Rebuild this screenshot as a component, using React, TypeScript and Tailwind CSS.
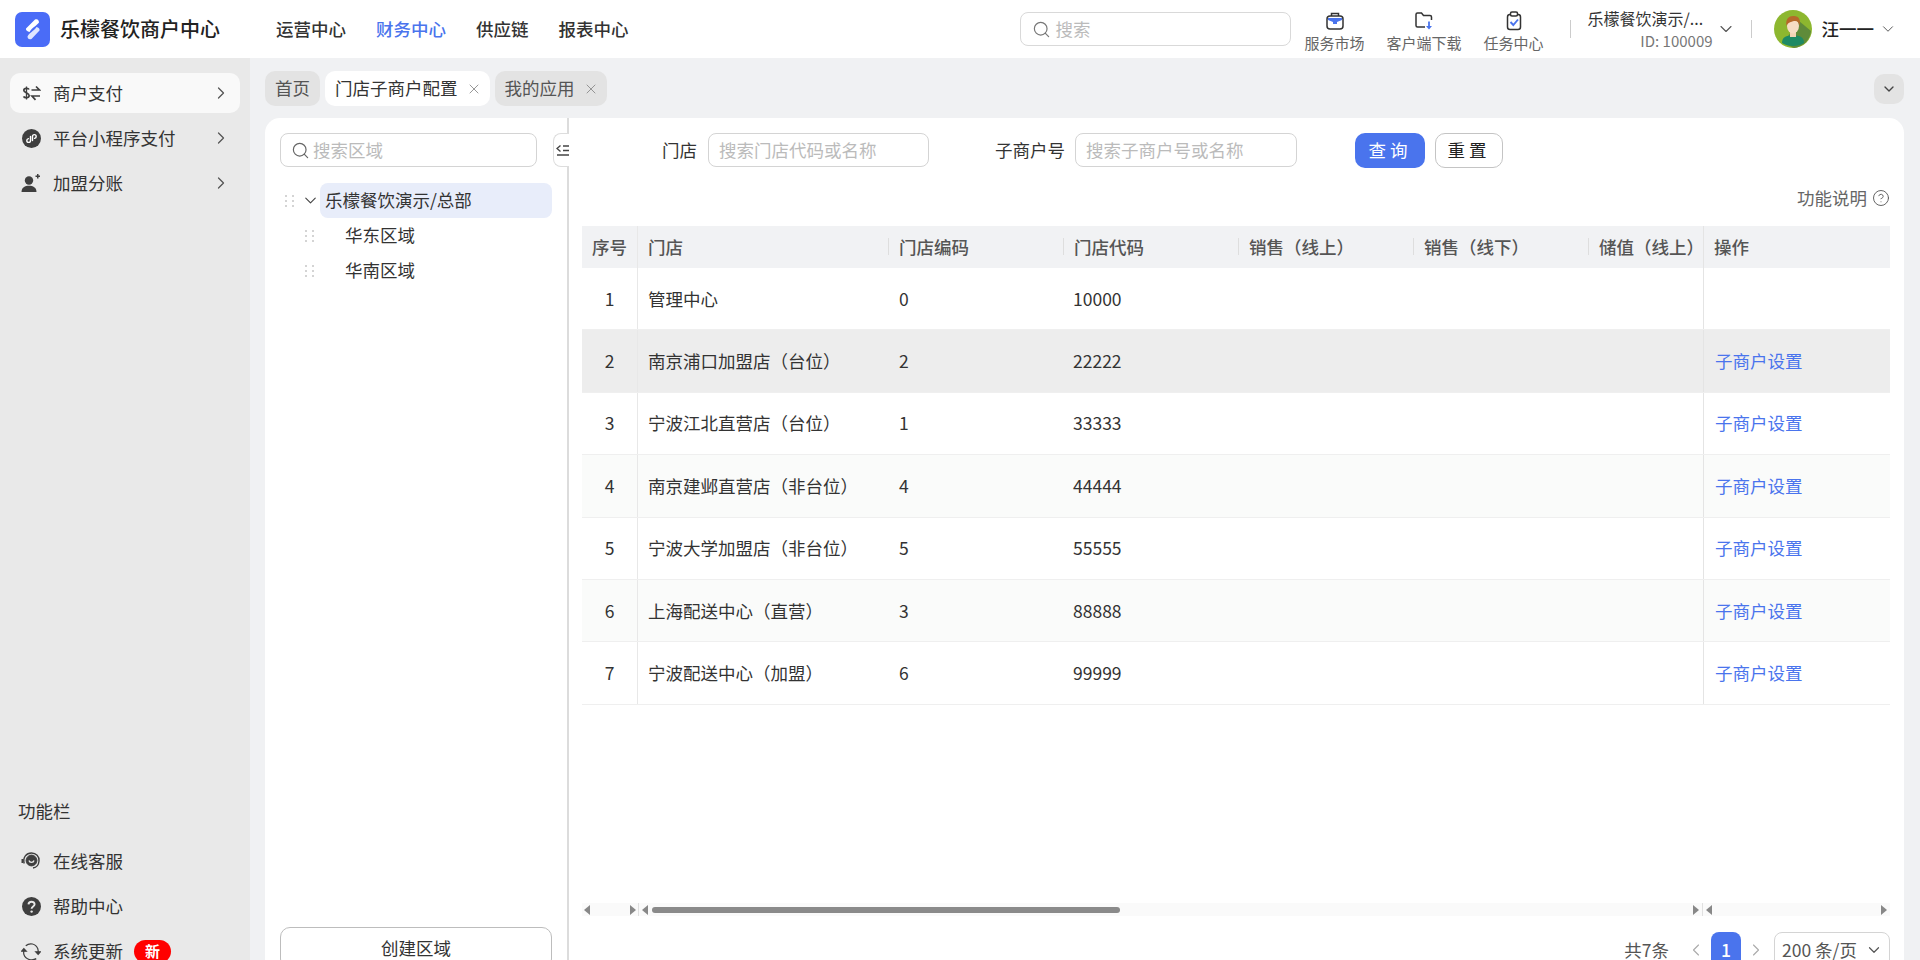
import { Search, ChevronRight, ChevronDown, ChevronLeft, X, CircleHelp } from "lucide-react";

const rows = [
  { no: 1, name: "管理中心", code: "0", shop: "10000", link: false, bg: "bg-white" },
  { no: 2, name: "南京浦口加盟店（台位）", code: "2", shop: "22222", link: true, bg: "bg-[#ededed]" },
  { no: 3, name: "宁波江北直营店（台位）", code: "1", shop: "33333", link: true, bg: "bg-white" },
  { no: 4, name: "南京建邺直营店（非台位）", code: "4", shop: "44444", link: true, bg: "bg-[#fafbfa]" },
  { no: 5, name: "宁波大学加盟店（非台位）", code: "5", shop: "55555", link: true, bg: "bg-white" },
  { no: 6, name: "上海配送中心（直营）", code: "3", shop: "88888", link: true, bg: "bg-[#fafbfa]" },
  { no: 7, name: "宁波配送中心（加盟）", code: "6", shop: "99999", link: true, bg: "bg-white" },
];

const headers = ["门店编码", "门店代码", "销售（线上）", "销售（线下）", "储值（线上）"];

function Logo() {
  return (
    <svg width="35" height="35" viewBox="0 0 35 35">
      <rect width="35" height="35" rx="7" fill="#4a6cf7" />
      <path d="M11 16.5 L20 7.5 C22.5 6.5 24 8 24 10.5 C22 13.5 17 15.5 14.5 20 C12.5 19.5 10.5 18.5 11 16.5Z" fill="#fff" />
      <path d="M12.5 24.5 C14 21 19 19 21.5 15 C23.5 15.5 25 16.5 24.5 18.5 L16.5 27 C14 28 12.5 26.5 12.5 24.5Z" fill="#dfe6ff" />
    </svg>
  );
}

function PayIcon() {
  return (
    <svg width="19" height="19" viewBox="0 0 19 19" fill="none" stroke="#3f3f3f" strokeWidth="1.7">
      <path d="M7 5.5 C6.5 4 2 3.7 1.8 6.2 C1.7 9 7.2 8.5 7.2 11.8 C7 14.3 2.3 14.2 1.6 12.4" />
      <path d="M4.5 2.5 V15.5" strokeWidth="1.3" />
      <path d="M9.5 6 H17.5 L14 2.5" />
      <path d="M18 12 H10 L13.5 15.8" />
    </svg>
  );
}

function MiniIcon() {
  return (
    <svg width="19" height="19" viewBox="0 0 19 19" fill="none">
      <circle cx="9.5" cy="9.5" r="9.5" fill="#3f3f3f" />
      <path d="M8.5 7.5 V11.5 C8.5 14 4.8 14 4.8 11.5 C4.8 10.4 5.6 9.8 6.4 9.6 M10.5 11.5 V7.5 C10.5 5 14.2 5 14.2 7.5 C14.2 8.6 13.4 9.2 12.6 9.4" stroke="#fff" strokeWidth="1.4" strokeLinecap="round" />
    </svg>
  );
}

function JoinIcon() {
  return (
    <svg width="20" height="20" viewBox="0 0 20 20" fill="#3f3f3f">
      <circle cx="8" cy="7.5" r="4.2" />
      <path d="M0.5 19 C0.5 14.5 4 12.8 8 12.8 C12 12.8 15.5 14.5 15.5 19 Z" />
      <path d="M14.5 3.2 H19 M16.75 1 V5.4" stroke="#3f3f3f" strokeWidth="1.5" fill="none" />
    </svg>
  );
}

function ServiceIcon() {
  return (
    <svg width="20" height="20" viewBox="0 0 20 20" fill="none" stroke="#3f3f3f">
      <path d="M3.2 12.5 C1.5 6 5.5 2 10.5 2 C15 2 18.5 5.5 18 10 C17.7 13.5 15.5 16.5 12 17" strokeWidth="1.4" />
      <circle cx="10.5" cy="9.5" r="5.4" fill="#3f3f3f" />
      <path d="M8 9.5 C8.5 12 12.5 12 13 9.5" stroke="#e9e9e9" strokeWidth="1.3" />
      <path d="M1.5 8 V12" strokeWidth="2" />
    </svg>
  );
}

function HelpIcon() {
  return (
    <svg width="19" height="19" viewBox="0 0 19 19">
      <circle cx="9.5" cy="9.5" r="9.5" fill="#3f3f3f" />
      <path d="M6.5 7.4 C6.6 3.8 12.6 3.9 12.6 7.3 C12.6 9.6 9.6 9.5 9.6 11.8" stroke="#e9e9e9" strokeWidth="1.9" fill="none" />
      <circle cx="9.6" cy="14.6" r="1.2" fill="#e9e9e9" />
    </svg>
  );
}

function RefreshIcon() {
  return (
    <svg width="21" height="21" viewBox="0 0 21 21" fill="none" stroke="#3f3f3f" strokeWidth="1.3">
      <path d="M5 4.5 C9 1 15.5 2 17.6 7.5 C18.2 9.5 18.2 10.5 18 12" />
      <path d="M16 18 C12 20.5 5 19.5 3 13.5 C2.7 12 2.7 11 3 9.5" />
      <path d="M15.5 10.8 L18 13.5 L20.3 10.8 Z" fill="#3f3f3f" />
      <path d="M0.7 10.2 L3 7.5 L5.5 10.2 Z" fill="#3f3f3f" />
    </svg>
  );
}

function BagIcon() {
  return (
    <svg width="20" height="20" viewBox="0 0 20 20" fill="none">
      <path d="M6.5 5 V2.5 H13.5 V5" stroke="#333" strokeWidth="1.5" />
      <rect x="2" y="5" width="16" height="13" rx="3" stroke="#333" strokeWidth="1.5" />
      <path d="M3 7 H17 V9 L12 11 V13 H8 V11 L3 9 Z" fill="#4a74ed" />
    </svg>
  );
}

function FolderIcon() {
  return (
    <svg width="20" height="20" viewBox="0 0 20 20" fill="none">
      <path d="M11 16 H3.5 C2.5 16 2 15.5 2 14.5 V3.5 C2 2.5 2.5 2 3.5 2 H7.5 L9.5 4.5 H16 C17 4.5 17.5 5 17.5 6 V9" stroke="#333" strokeWidth="1.5" />
      <path d="M15 10.5 V16" stroke="#4a74ed" strokeWidth="1.8" />
      <path d="M12 15 H18 L15 18.5 Z" fill="#4a74ed" />
    </svg>
  );
}

function TaskIcon() {
  return (
    <svg width="20" height="20" viewBox="0 0 20 20" fill="none">
      <rect x="3.5" y="3.5" width="13" height="15" rx="2.5" stroke="#333" strokeWidth="1.5" />
      <rect x="6.5" y="1" width="7" height="4" rx="1.5" fill="#fff" stroke="#333" strokeWidth="1.5" />
      <path d="M6.5 11 L9.3 14 L14 8.5" stroke="#4a74ed" strokeWidth="1.9" />
    </svg>
  );
}

function Avatar() {
  return (
    <svg width="38" height="38" viewBox="0 0 38 38">
      <circle cx="19" cy="19" r="19" fill="#8db72f" />
      <path d="M25 11 L37 21 C36 31 28 37 20 38 L9 33 Z" fill="#5f8b3a" />
      <path d="M8 33 C8 27 12 25.5 19 25.5 C26 25.5 30 27 30 33 C27 35 23 36 19 36 C15 36 11 35 8 33Z" fill="#1e8a64" />
      <rect x="16" y="21" width="6" height="6" fill="#f3d3b5" />
      <ellipse cx="19" cy="16" rx="6" ry="7.5" fill="#f6dcc4" />
      <path d="M12.5 16 C11 8 16 5.5 20 6 C25 6 27 10 25.5 16 C25 12 23 10.5 20 11 C17 12 14 12 12.5 16Z" fill="#b5692a" />
    </svg>
  );
}

function Dots() {
  return (
    <div className="grid w-[10px] grid-cols-2 gap-x-[4px] gap-y-[3px]">
      {[0, 1, 2, 3, 4, 5].map((i) => (
        <span key={i} className="h-[2px] w-[2px] bg-[#d4d4d4]" />
      ))}
    </div>
  );
}

function NavItem({ icon, label, active }: { icon: React.ReactNode; label: string; active?: boolean }) {
  return (
    <div className={`mx-[10px] flex h-[40px] items-center rounded-[10px] pl-[11px] pr-[9px] ${active ? "bg-[#f9f9f9]" : ""}`}>
      <span className="flex w-[20px] justify-center">{icon}</span>
      <span className="ml-[12px] flex-1 text-[#333]">{label}</span>
      <ChevronRight size={20} strokeWidth={1.5} className="text-[#555]" />
    </div>
  );
}

function TopLink({ icon, label }: { icon: React.ReactNode; label: string }) {
  return (
    <div className="flex flex-col items-center">
      <span className="mt-[5px] flex h-[22px] items-center">{icon}</span>
      <span className="mt-[1px] text-[15px] leading-[20px] text-[#666]">{label}</span>
    </div>
  );
}

export default function App() {
  return (
    <div className="flex h-[960px] w-[1920px] flex-col overflow-hidden font-['Noto_Sans_CJK_SC','Noto_Sans',sans-serif] text-[17.5px] text-[#333]">
      {/* Header */}
      <header className="flex h-[58px] shrink-0 items-center bg-white">
        <div className="ml-[15px]"><Logo /></div>
        <div className="ml-[10px] w-[160px] text-[20px] font-medium text-[#222]">乐檬餐饮商户中心</div>
        <nav className="ml-[56px] flex gap-[30px] font-medium text-[#333]">
          <span>运营中心</span>
          <span className="text-[#4a74ed]">财务中心</span>
          <span>供应链</span>
          <span>报表中心</span>
        </nav>
        <div className="ml-[391px] flex h-[34px] w-[271px] items-center rounded-lg border border-[#d9d9d9] pl-[11px]">
          <Search size={19} strokeWidth={1.5} className="text-[#777]" />
          <span className="ml-[5px] text-[#bbb]">搜索</span>
        </div>
        <div className="ml-[14px] flex gap-[22px]">
          <TopLink icon={<BagIcon />} label="服务市场" />
          <TopLink icon={<FolderIcon />} label="客户端下载" />
          <TopLink icon={<TaskIcon />} label="任务中心" />
        </div>
        <span className="ml-[26px] h-[18px] w-px bg-[#ccc]" />
        <div className="ml-[17px] flex w-[125px] flex-col">
          <span className="text-[16px] leading-[20px] text-[#333]">乐檬餐饮演示/...</span>
          <span className="mt-[3px] self-end text-[15px] leading-[20px] text-[#777]">ID: 100009</span>
        </div>
        <ChevronDown size={20} strokeWidth={1.3} className="ml-[3px] text-[#555]" />
        <span className="ml-[15px] h-[18px] w-px bg-[#ccc]" />
        <div className="ml-[22px]"><Avatar /></div>
        <span className="ml-[10px] font-medium text-[#222]">汪一一</span>
        <ChevronDown size={18} strokeWidth={1.3} className="ml-[5px] text-[#555]" />
      </header>

      <div className="flex h-[916px] shrink-0">
        {/* Sidebar */}
        <aside className="flex w-[250px] shrink-0 flex-col gap-[5px] bg-[#e9e9e9] pb-[3px] pt-[15px]">
          <NavItem icon={<PayIcon />} label="商户支付" active />
          <NavItem icon={<MiniIcon />} label="平台小程序支付" />
          <NavItem icon={<JoinIcon />} label="加盟分账" />
          <div className="mt-auto mb-[12px] ml-[18px] text-[#333]">功能栏</div>
          {[
            { icon: <ServiceIcon />, label: "在线客服" },
            { icon: <HelpIcon />, label: "帮助中心" },
          ].map((f) => (
            <div key={f.label} className="mx-[10px] flex h-[40px] items-center pl-[11px]">
              <span className="flex w-[20px] justify-center">{f.icon}</span>
              <span className="ml-[12px]">{f.label}</span>
            </div>
          ))}
          <div className="mx-[10px] flex h-[40px] items-center pl-[11px]">
            <span className="flex w-[20px] justify-center"><RefreshIcon /></span>
            <span className="ml-[12px]">系统更新</span>
            <span className="ml-[11px] flex h-[23px] w-[37px] items-center justify-center rounded-full bg-[#ff0000] text-[15px] font-bold text-white">新</span>
          </div>
        </aside>

        {/* Main */}
        <main className="flex flex-1 flex-col bg-[#f0f1f3] pl-[15px] pr-[16px]">
          <div className="flex h-[60px] shrink-0 items-center pb-[-2px] pt-[1px]">
            <div className="flex flex-1 gap-[5px]">
              <div className="flex h-[35px] items-center rounded-[10px] bg-[#e3e3e3] px-[10px] text-[#555]">首页</div>
              <div className="flex h-[35px] items-center rounded-[10px] bg-white pl-[10px] pr-[8px] text-[#333]">
                门店子商户配置
                <X size={16} strokeWidth={1.3} className="ml-[8px] text-[#888]" />
              </div>
              <div className="flex h-[35px] items-center rounded-[10px] bg-[#e3e3e3] pl-[10px] pr-[8px] text-[#555]">
                我的应用
                <X size={16} strokeWidth={1.3} className="ml-[8px] text-[#888]" />
              </div>
            </div>
            <div className="flex h-[30px] w-[30px] items-center justify-center rounded-[10px] bg-[#e3e3e3]">
              <ChevronDown size={16} className="text-[#444]" />
            </div>
          </div>

          <div className="relative flex h-[856px] shrink-0 rounded-t-[15px] bg-white">
            {/* Area tree */}
            <section className="flex w-[302px] shrink-0 flex-col px-[15px] pb-[5px] pt-[15px]">
              <div className="flex h-[34px] w-[257px] items-center rounded-lg border border-[#d4d4d4] pl-[10px]">
                <Search size={19} strokeWidth={1.5} className="text-[#666]" />
                <span className="ml-[3px] text-[#bbb]">搜索区域</span>
              </div>
              <div className="ml-[5px] mt-[16px] flex h-[35px] items-center">
                <Dots />
                <ChevronDown size={19} strokeWidth={1.4} className="ml-[6px] text-[#444]" />
                <div className="flex h-[35px] w-[232px] items-center rounded-lg bg-[#e8edfa] pl-[5px]">乐檬餐饮演示/总部</div>
              </div>
              {["华东区域", "华南区域"].map((t) => (
                <div key={t} className="ml-[25px] flex h-[35px] items-center">
                  <Dots />
                  <span className="ml-[30px]">{t}</span>
                </div>
              ))}
              <div className="mt-auto flex h-[42px] w-[272px] items-center justify-center rounded-[10px] border border-[#bdbdbd]">创建区域</div>
            </section>
            <div className="w-[2px] shrink-0 bg-[#dcdcdc]" />
            <div className="absolute left-[288px] top-[15px] flex h-[34px] w-[16px] items-center rounded-l-lg border border-r-0 border-[#ddd] bg-white pl-[2px]">
              <svg width="13" height="14" viewBox="0 0 13 14" fill="none" stroke="#444" strokeWidth="1.4">
                <path d="M4.5 2.5 L1 5.5 L4.5 8.5 M7 3 H13 M7 7.5 H13 M1 12 H13" />
              </svg>
            </div>

            {/* Table side */}
            <section className="flex min-w-0 flex-1 flex-col pl-[13px] pr-[14px] pt-[15px]">
              <div className="flex h-[34px] shrink-0 items-center pl-[80px]">
                <span>门店</span>
                <div className="ml-[11px] flex h-[34px] w-[221px] items-center rounded-lg border border-[#d4d4d4] pl-[10px] text-[#bbb]">搜索门店代码或名称</div>
                <span className="ml-[66px]">子商户号</span>
                <div className="ml-[10px] flex h-[34px] w-[222px] items-center rounded-lg border border-[#d4d4d4] pl-[10px] text-[#bbb]">搜索子商户号或名称</div>
                <button className="ml-[58px] flex h-[35px] w-[70px] items-center justify-center rounded-[10px] bg-[#4a74ed] tracking-[4px] text-white">查询</button>
                <button className="ml-[10px] flex h-[35px] w-[68px] items-center justify-center rounded-[10px] border border-[#c4c4c4] tracking-[4px] text-[#222]">重置</button>
              </div>
              <div className="mt-[19px] flex h-[24px] shrink-0 items-center justify-end text-[#666]">
                功能说明
                <CircleHelp size={18} strokeWidth={1.2} className="ml-[5px] text-[#555]" />
              </div>

              <div className="mt-[16px] shrink-0">
                <div className="grid h-[42px] grid-cols-[56px_250px_175px_175px_175px_175px_115px_187px] items-center bg-[#f1f2f4] font-medium text-[#555]">
                  <div className="flex h-full items-center justify-center border-r border-[#e8e8e8]">序号</div>
                  <div className="pl-[10px]">门店</div>
                  {headers.map((h) => (
                    <div key={h} className="relative whitespace-nowrap pl-[11px]">
                      <span className="absolute left-0 top-[4px] h-[17px] w-px bg-[#dedede]" />
                      {h}
                    </div>
                  ))}
                  <div className="relative flex h-full items-center border-l border-[#e4e4e4] pl-[10px]">操作</div>
                </div>
                {rows.map((r) => (
                  <div key={r.no} className={`grid h-[62.4px] grid-cols-[56px_250px_175px_175px_175px_175px_115px_187px] items-center border-b border-[#efefef] ${r.bg}`}>
                    <div className="flex h-full items-center justify-center border-r border-[#e8e8e8]">{r.no}</div>
                    <div className="whitespace-nowrap pl-[10px]">{r.name}</div>
                    <div className="pl-[11px]">{r.code}</div>
                    <div className="pl-[10px]">{r.shop}</div>
                    <div />
                    <div />
                    <div />
                    <div className="flex h-full items-center border-l border-[#e4e4e4] pl-[11px] text-[#4a74ed]">{r.link ? "子商户设置" : ""}</div>
                  </div>
                ))}
              </div>

              {/* Scrollbars */}
              <div className="mt-auto flex h-[13px] shrink-0 bg-[#fafafa] text-[#888]">
                <div className="flex w-[56px] items-center justify-between px-[2px]">
                  <span className="border-y-[5px] border-r-[6px] border-y-transparent border-r-[#888]" />
                  <span className="border-y-[5px] border-l-[6px] border-y-transparent border-l-[#888]" />
                </div>
                <div className="flex w-[1064px] items-center justify-between border-l border-[#e0e0e0] px-[3px]">
                  <span className="border-y-[5px] border-r-[6px] border-y-transparent border-r-[#888]" />
                  <div className="ml-[4px] h-[6px] w-[468px] rounded-full bg-[#8a8a8a]" />
                  <span className="ml-auto border-y-[5px] border-l-[6px] border-y-transparent border-l-[#888]" />
                </div>
                <div className="flex flex-1 items-center justify-between border-l border-[#e0e0e0] px-[3px]">
                  <span className="border-y-[5px] border-r-[6px] border-y-transparent border-r-[#888]" />
                  <span className="border-y-[5px] border-l-[6px] border-y-transparent border-l-[#888]" />
                </div>
              </div>

              {/* Pagination */}
              <div className="mb-[6px] mt-[16px] flex h-[36px] shrink-0 items-center justify-end">
                <span className="text-[#555]">共7条</span>
                <ChevronLeft size={20} strokeWidth={1.3} className="ml-[17px] text-[#aaa]" />
                <span className="ml-[5px] flex h-[36px] w-[30px] items-center justify-center rounded-lg bg-[#4a74ed] font-medium text-white">1</span>
                <ChevronRight size={20} strokeWidth={1.3} className="ml-[5px] text-[#aaa]" />
                <div className="ml-[8px] flex h-[36px] w-[116px] items-center justify-between rounded-lg border border-[#d4d4d4] pl-[7px] pr-[6px] text-[#555]">
                  200 条/页
                  <ChevronDown size={18} strokeWidth={1.6} className="text-[#555]" />
                </div>
              </div>
            </section>
          </div>
        </main>
      </div>
    </div>
  );
}
